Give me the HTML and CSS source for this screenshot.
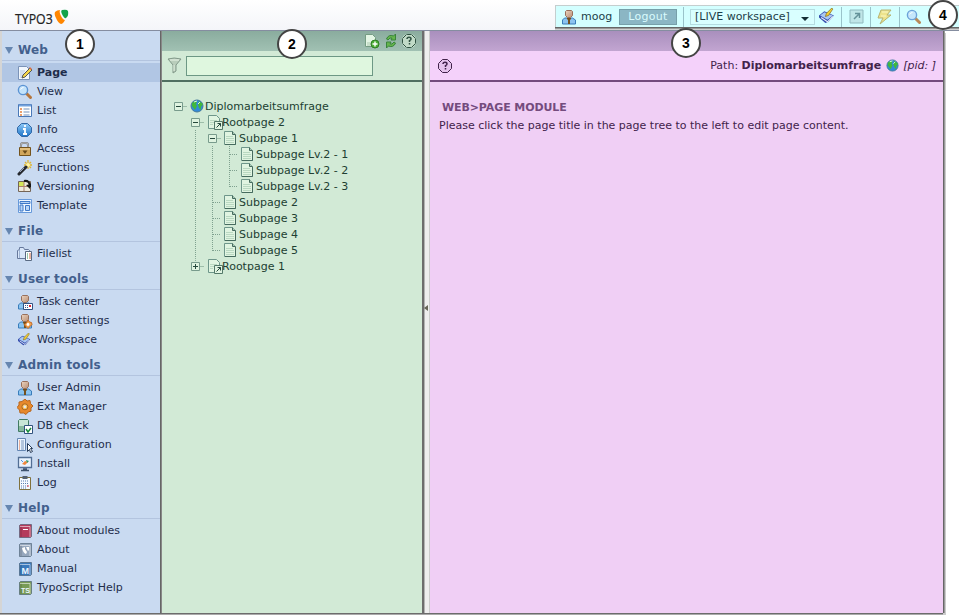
FILE: index.html
```html
<!DOCTYPE html>
<html lang="en">
<head>
<meta charset="utf-8">
<title>TYPO3</title>
<link rel="stylesheet" href="styles.css">
</head>
<body>
<svg class="defs" width="0" height="0">
<defs>
<linearGradient id="gb" x2="0" y2="1"><stop stop-color="#8fc9f7"/><stop offset="1" stop-color="#1e74c8"/></linearGradient>
<linearGradient id="gs" x2="1" y2="1"><stop stop-color="#ecd4bf"/><stop offset="1" stop-color="#b88f76"/></linearGradient>
</defs>
<symbol id="page-edit" viewBox="0 0 16 16"><path d="M1.5 1.5h8l3 3v10h-11z" fill="#f2f7fd" stroke="#7b93b8"/><path d="M3 6h5M3 8h4M3 10h3M3 12h2" stroke="#b3c6df"/><path d="M5 13l1-3 7-7 2 2-7 7z" fill="#f5d64a" stroke="#555"/><path d="M12 3l1-1 2 2-1 1z" fill="#d96a4a"/></symbol>
<symbol id="magnify" viewBox="0 0 16 16"><path d="M9.5 9.5l4 4" stroke="#b5763d" stroke-width="3" stroke-linecap="round"/><circle cx="6" cy="6" r="4.6" fill="#c3e3fb" stroke="#5b93d3" stroke-width="1.4"/><path d="M3.5 5.5q1-2 3-2" stroke="#fff" fill="none"/></symbol>
<symbol id="list" viewBox="0 0 16 16"><path d="M1.500 1.500h13v12h-13z" fill="#fff" stroke="#4a79b8"/><path d="M2 2.500h12" stroke="#74a3dd" stroke-width="2"/><path d="M3 6h2M3 9h2M3 12h2" stroke="#e5803b" stroke-width="1.500"/><path d="M6.500 6h6M6.500 9h6M6.500 12h6" stroke="#7390b9"/></symbol>
<symbol id="info" viewBox="0 0 16 16"><path d="M4.500 1.500h6l4 4v5l-4 4h-6l-4-4v-5z" fill="url(#gb)" stroke="#3268a6"/><path d="M8 3v2M6 7h2v5M6 12h4" fill="none" stroke="#fff" stroke-width="1.800"/></symbol>
<symbol id="lock" viewBox="0 0 16 16"><path d="M4 8V4q0-2 2-2h3q2 0 2 2v4" fill="none" stroke="#777" stroke-width="2"/><path d="M4 7V4q0-2 2-2h3q2 0 2 2v3" fill="none" stroke="#ddd" stroke-width=".7"/><path d="M2.500 6.500h11v8h-11z" fill="#d1a65c" stroke="#74531c"/><path d="M3 8h10" stroke="#f3d59b"/><path d="M5.500 9.500h5L8 13z" fill="#6a4b1a"/></symbol>
<symbol id="wand" viewBox="0 0 16 16"><path d="M11 0v9M7 5h8M8 2l6 6M14 2L8 8" stroke="#dfb530" stroke-width="1.300"/><circle cx="11" cy="5" r="2" fill="#fff4a5"/><path d="M2 14l7-7" stroke="#25282e" stroke-width="3" stroke-linecap="round"/><path d="M3 12l4-4" stroke="#9aa5bb"/></symbol>
<symbol id="version" viewBox="0 0 16 16"><path d="M1.500 2.500h12v10h-12z" fill="#efeadd" stroke="#756556"/><path d="M2 3h5v5H2z" fill="#d5e657"/><path d="M7 3v9M2 7.500h11" stroke="#ae8370"/><path d="M7 2q6-1 6 6" fill="none" stroke="#161616" stroke-width="2"/><path d="M9 6l4 4 1-5z" fill="#161616"/></symbol>
<symbol id="template" viewBox="0 0 16 16"><path d="M1.500 1.500h13v13h-13z" fill="#eff7ff" stroke="#6799da"/><path d="M3 3.500h10v2H3zM3 7h3v6H3zM8.500 7.500h4v5h-4z" fill="#b9d5f6" stroke="#3e79c8"/></symbol>
<symbol id="files" viewBox="0 0 16 16"><path d="M.5 12.500V4.500l2-1V1.500h4l1 2h4l1 1v8z" fill="#d9e7fa" stroke="#67799c"/><path d="M2.500 4v8" stroke="#9eb3d3"/><path d="M8.500 5.500h6v9h-6z" fill="#fff" stroke="#596a83"/><path d="M10 8h1M10 10h1M10 12h1" stroke="#2e8e52"/><path d="M12 8h2M12 10h2M12 12h2" stroke="#ce6840"/></symbol>
<symbol id="user" viewBox="0 0 16 16"><path d="M1.500 15V11l2-2h8l3 2v4z" fill="#8bc3ef" stroke="#397dbb"/><path d="M5.500 1.500h5l1 1v4l-2 2h-3l-2-2v-4z" fill="url(#gs)" stroke="#98705c"/><path d="M6 9h4v1l-1 1v4H7v-4L6 10z" fill="#74511f"/></symbol>
<symbol id="task" viewBox="0 0 16 16"><use href="#user"/><path d="M6.500 9.500h9v6h-9z" fill="#fff" stroke="#315283"/><path d="M8 11.500h1m1 0h1M8 13.500h1m1 0h1" stroke="#355b98"/><path d="M12 11h2v2h-2z" fill="#dd2634"/></symbol>
<symbol id="settings" viewBox="0 0 16 16"><use href="#user"/><path d="M11 7l1.500 2 2 .5.500 2-2 2-2 2-2-2-2-2 2-1z" fill="#f2a14f" stroke="#c56a22"/><circle cx="11" cy="11.500" r="1.400" fill="#fff"/></symbol>
<symbol id="workspace" viewBox="0 0 16 16"><path d="M0 7l5-4 9 4-5 6-3 1-6-5z" fill="#334cad"/><path d="M1 7l4-3 8 3-5 4z" fill="#a9c8f3"/><path d="M2 9l6 4 5-5" stroke="#e5ebf7" fill="none"/><path d="M6 8l1-3 5-5 1 1-4 6z" fill="#f2cd33" stroke="#76601d" stroke-width=".6"/></symbol>
<symbol id="gear" viewBox="0 0 16 16"><path d="M8 0l2 2 3-.5.500 3L16 7l-2 2 0 3-3 1-2 2.500L6.500 14 3 14l-.5-3L0 8.500 2 6l0-3 3-.5z" fill="#e7892c" stroke="#b8661e"/><circle cx="7.900" cy="7.800" r="3" fill="#ffc45d" stroke="#a86522"/><circle cx="7.900" cy="7.800" r="1.300" fill="#ddebfa"/></symbol>
<symbol id="db" viewBox="0 0 16 16"><path d="M1.500 2.500l1-1h8l1 1v11h-10z" fill="#c9e6d6" stroke="#417a62"/><path d="M2 8h9v5H2z" fill="#86b89d"/><path d="M7.500 7.500h8v8h-8z" fill="#fff" stroke="#31527d"/><path d="M9 11l2 3 3-4" fill="none" stroke="#168b3c" stroke-width="1.500"/></symbol>
<symbol id="config" viewBox="0 0 16 16"><path d="M.5 1.500h8v12h-8z" fill="#edf5ff" stroke="#6586b2"/><path d="M2 4h1M2 6h1M2 8h1M2 10h1M2 12h1" stroke="#e36f3a"/><path d="M4 4h3M4 6h3M4 8h3M4 10h3M4 12h3" stroke="#7996bc"/><path d="M10.500 6.500v8l2-2 1 3 2-1-2-3h2z" fill="#fff" stroke="#263a57"/></symbol>
<symbol id="install" viewBox="0 0 16 16"><path d="M1.500 1.500h13v10h-13z" fill="#e9f3ff" stroke="#526e94" stroke-width="1.300"/><path d="M4 14.500h8M6 13h4" stroke="#3c516d" stroke-width="1.500"/><path d="M5 8l3-3 3 1-3 3z" fill="#ef873c"/><path d="M9 4l3 1-2 2z" fill="#2d9764"/><path d="M4 4l2 2" stroke="#5694df"/></symbol>
<symbol id="log" viewBox="0 0 16 16"><path d="M2.500 2.500h11v12h-11z" fill="#f4faff" stroke="#80713c"/><path d="M5.500 1h5v3h-5z" fill="#536071"/><path d="M4 6h8M4 8.500h8M4 11h8M4 13h6" stroke="#597baf" stroke-dasharray="1 1"/><path d="M10 11h2" stroke="#dc3f4b"/></symbol>
<symbol id="book" viewBox="0 0 16 16"><path d="M2.500 2.500l1-1h11v12l-1 1h-11z" fill="currentColor" stroke="#394f62" stroke-opacity=".55"/><path d="M3 3.500h10V14" fill="none" stroke="#fff" stroke-opacity=".55"/><path d="M4 3.500V14" stroke="#000" stroke-opacity=".2"/></symbol>
<symbol id="globe" viewBox="0 0 14 14"><circle cx="7" cy="7" r="6" fill="#318bd9" stroke="#467a9c"/><path d="M2 4l3-2 2 1-1 2 1 2-2 4-3-4zM9 2l4 3-2 3 0 3-2-2-1-3z" fill="#41b83d"/><path d="M4 3l3-1M8 5l2-2" stroke="#dcfbdc"/></symbol>
<symbol id="page" viewBox="0 0 14 16"><path d="M1.500 1.500h8l3 3v10h-11z" fill="#e0f4e1" stroke="#6e968a"/><path d="M9.500 1.500v3h3" fill="#a9c8b4" stroke="#466b5e"/><path d="M12.500 5v9.500H2" fill="none" stroke="#466b5e"/><path d="M3 6.500h7M3 8.500h8M3 10.500h8M3 12.500h8" stroke="#b9d8c1"/></symbol>
<symbol id="root" viewBox="0 0 16 16"><path d="M1.500 1.500h8l3 3v10h-11z" fill="#e0f4e1" stroke="#6e968a"/><path d="M3 6.500h7M3 8.500h5M3 10.500h3" stroke="#b9d8c1"/><path d="M7.500 7.500h8v8h-8z" fill="#e0f4e1" stroke="#537869"/><path d="M9.500 13.500l4-4M10.500 9.500h3v3" fill="none" stroke="#25483c"/></symbol>
<symbol id="minus" viewBox="0 0 17 16"><path d="M4.500 4.500h8v8h-8z" fill="#dff3e0" stroke="#789b8c"/><path d="M6 8.500h5" stroke="#25483c"/><path d="M13 8.500h4" stroke="#9dbda9"/></symbol>
<symbol id="plus" viewBox="0 0 17 16"><use href="#minus"/><path d="M8.500 6v5" stroke="#25483c"/><path d="M8.500 0v4" stroke="#8cae9b" stroke-dasharray="1 1"/></symbol>
<symbol id="vert" viewBox="0 0 17 16"><path d="M8.500 0v16" stroke="#7fa18f" stroke-dasharray="1 1"/></symbol>
<symbol id="tee" viewBox="0 0 17 16"><path d="M8.500 0v16M9 8.500h8" stroke="#7fa18f" stroke-dasharray="1 1"/></symbol>
<symbol id="end" viewBox="0 0 17 16"><path d="M8.500 0v9M9 8.500h8" fill="none" stroke="#7fa18f" stroke-dasharray="1 1"/></symbol>
<symbol id="help" viewBox="0 0 14 14"><path d="M4.500.5h5l4 4v5l-4 4h-5l-4-4v-5z" fill="currentColor" fill-opacity=".08" stroke="currentColor"/><path d="M5 5q0-1.700 2-1.700T9 5Q9 6 7.500 6.600V8M7.500 9v1.500" fill="none" stroke="currentColor" stroke-width="1.500"/></symbol>
</svg>

<header class="top">
  <div class="logo"><span>TYPO3</span><svg width="16" height="16" viewBox="0 0 16 16"><path d="M1 3Q3 1 6 1Q5 3 7 7Q9 11 11 11Q9 15 7 15Q4 14 2 9Q0 5 1 3z" fill="#ff8600"/><path d="M8 1Q13 0 14 2Q15 7 12 9Q11 10 9 7Q6 2 8 1z" fill="#13a34a"/></svg></div>
  <div class="tools">
    <svg class="u" width="16" height="16"><use href="#user"/></svg><span class="name">moog</span><button class="logout">Logout</button><i class="sep s1"></i>
    <div class="select"><span>[LIVE workspace]</span><b></b></div>
    <svg class="ws" width="17" height="17"><use href="#workspace"/></svg><i class="sep s2"></i>
    <svg class="short" width="15" height="15" viewBox="0 0 15 15"><path d="M1 1h13v13H1z" fill="#bde2e4" stroke="#86aeb5"/><path d="M5 10l5-5M6 4.500h4.500V9" fill="none" stroke="#527f89" stroke-width="1.500"/></svg><i class="sep s3"></i>
    <svg class="flash" width="17" height="16" viewBox="0 0 17 16"><path d="M5 1h10l-4 5h4L4 15l3-6H2z" fill="#f2df78" stroke="#b2a65a"/><path d="M6 3h6M5 7h5" stroke="#fff5bd"/></svg><i class="sep s4"></i>
    <svg class="find" width="16" height="16"><use href="#magnify"/></svg>
  </div>
</header>

<main class="frame">
<nav class="menu">
  <section><h2>Web</h2><ul>
    <li class="on"><svg><use href="#page-edit"/></svg>Page</li>
    <li><svg><use href="#magnify"/></svg>View</li>
    <li><svg><use href="#list"/></svg>List</li>
    <li><svg><use href="#info"/></svg>Info</li>
    <li><svg><use href="#lock"/></svg>Access</li>
    <li><svg><use href="#wand"/></svg>Functions</li>
    <li><svg><use href="#version"/></svg>Versioning</li>
    <li><svg><use href="#template"/></svg>Template</li></ul></section>
  <section><h2>File</h2><ul><li><svg><use href="#files"/></svg>Filelist</li></ul></section>
  <section><h2>User tools</h2><ul>
    <li><svg><use href="#task"/></svg>Task center</li>
    <li><svg><use href="#settings"/></svg>User settings</li>
    <li><svg class="small"><use href="#workspace"/></svg>Workspace</li></ul></section>
  <section><h2>Admin tools</h2><ul>
    <li><svg><use href="#user"/></svg>User Admin</li>
    <li><svg><use href="#gear"/></svg>Ext Manager</li>
    <li><svg><use href="#db"/></svg>DB check</li>
    <li><svg><use href="#config"/></svg>Configuration</li>
    <li><svg><use href="#install"/></svg>Install</li>
    <li><svg><use href="#log"/></svg>Log</li></ul></section>
  <section><h2>Help</h2><ul>
    <li><svg class="red" viewBox="0 0 16 16"><use href="#book"/><path d="M6 6.500h5" stroke="#fff"/></svg>About modules</li>
    <li><svg class="grey" viewBox="0 0 16 16"><use href="#book"/><path d="M5 6l3-1v2l2 3-1 2Q6 11 5 6zM9 5h3v3l-1 1z" fill="#fff"/></svg>About</li>
    <li><svg class="blue" viewBox="0 0 16 16"><use href="#book"/><text x="4.500" y="12.500">M</text></svg>Manual</li>
    <li><svg class="green" viewBox="0 0 16 16"><use href="#book"/><text x="4" y="12.500" class="ts">TS</text></svg>TypoScript Help</li></ul></section>
</nav>

<aside class="treepane">
  <div class="bar">
    <svg width="16" height="16" viewBox="0 0 16 16"><path d="M1.500 1.500h7l3 3v9h-10z" fill="#e3f5e4" stroke="#759c83"/><path d="M3 10h7M3 12h6" stroke="#abc8b0"/><circle cx="11" cy="11" r="4" fill="#4cae35" stroke="#2f7e24"/><path d="M11 8.500v5M8.500 11h5" stroke="#fff" stroke-width="1.400"/></svg>
    <svg width="14" height="16" viewBox="0 0 14 16"><path d="M2.500 6q2-5 7-3l2-2v6H7l1-2q-2-1-4 2z" fill="#65b44d" stroke="#38843a"/><path d="M11.500 10q-2 5-7 3l-2 2V9H7l-1 2q2 1 4-2z" fill="#65b44d" stroke="#38843a"/></svg>
    <svg class="h" width="14" height="14"><use href="#help"/></svg>
  </div>
  <div class="filter"><svg width="16" height="17" viewBox="0 0 16 17"><path d="M1 2q6-2 13 0L9 8v6l-3 2V8z" fill="#b9cdbb" stroke="#82998a"/><path d="M3 3h9" stroke="#e9f5e8"/><path d="M7 8v6" stroke="#e3f1e2"/></svg><input type="text" aria-label="Filter"></div>
  <div class="tree">
    <p><svg><use href="#minus"/></svg><svg class="gl"><use href="#globe"/></svg>Diplomarbeitsumfrage</p>
    <p><s></s><svg><use href="#minus"/></svg><svg class="rt"><use href="#root"/></svg>Rootpage 2</p>
    <p><s></s><svg><use href="#vert"/></svg><svg><use href="#minus"/></svg><svg class="pg"><use href="#page"/></svg>Subpage 1</p>
    <p><s></s><svg><use href="#vert"/></svg><svg><use href="#vert"/></svg><svg><use href="#tee"/></svg><svg class="pg"><use href="#page"/></svg>Subpage Lv.2 - 1</p>
    <p><s></s><svg><use href="#vert"/></svg><svg><use href="#vert"/></svg><svg><use href="#tee"/></svg><svg class="pg"><use href="#page"/></svg>Subpage Lv.2 - 2</p>
    <p><s></s><svg><use href="#vert"/></svg><svg><use href="#vert"/></svg><svg><use href="#end"/></svg><svg class="pg"><use href="#page"/></svg>Subpage Lv.2 - 3</p>
    <p><s></s><svg><use href="#vert"/></svg><svg><use href="#tee"/></svg><svg class="pg"><use href="#page"/></svg>Subpage 2</p>
    <p><s></s><svg><use href="#vert"/></svg><svg><use href="#tee"/></svg><svg class="pg"><use href="#page"/></svg>Subpage 3</p>
    <p><s></s><svg><use href="#vert"/></svg><svg><use href="#tee"/></svg><svg class="pg"><use href="#page"/></svg>Subpage 4</p>
    <p><s></s><svg><use href="#vert"/></svg><svg><use href="#end"/></svg><svg class="pg"><use href="#page"/></svg>Subpage 5</p>
    <p><s></s><svg><use href="#plus"/></svg><svg class="rt"><use href="#root"/></svg>Rootpage 1</p>
  </div>
</aside>
<div class="splitter"><svg width="4" height="6" viewBox="0 0 4 6"><path d="M4 0v6L0 3z" fill="#666658"/></svg></div>
<article class="content">
  <div class="bar"></div>
  <div class="path"><svg width="14" height="14"><use href="#help"/></svg><span class="where">Path:&nbsp;</span><b>Diplomarbeitsumfrage</b><svg class="gl" width="13" height="13"><use href="#globe"/></svg><em>[pid: ]</em></div>
  <h1>WEB&gt;PAGE MODULE</h1>
  <p class="msg">Please click the page title in the page tree to the left to edit page content.</p>
</article>
</main>
<span class="badge b1">1</span><span class="badge b2">2</span><span class="badge b3">3</span><span class="badge b4">4</span>
</body>
</html>
```
FILE: styles.css
```css
* { box-sizing: border-box; }
body { margin: 0; width: 959px; height: 616px; overflow: hidden; position: relative; background: #fff; font: 11px/16px "DejaVu Sans", sans-serif; color: #1e2d4b; }
svg { display: block; flex: none; }
.defs { position: absolute; }
.top { height: 31px; display: flex; justify-content: space-between; background: linear-gradient(#fff, #f4f5f9); border-bottom: 1px solid #858da0; }
.logo { display: flex; align-items: flex-start; padding: 9px 0 0 15px; }
.logo span { font: 14px/19px "Open Sans", sans-serif; color: #222; width: 39px; transform: scaleX(.88); transform-origin: left; white-space: nowrap; -webkit-text-stroke: .2px #222; }
.tools { width: 404px; height: 22px; margin-top: 5px; padding-left: 5px; background: #d3ffff; border-left: 1px solid #c4cece; border-top: 1px solid #c4cece; box-shadow: 0 1px #666, 0 2px #999, 0 3px #d0d0d0; display: flex; align-items: center; color: #1c3e49; }
.name { margin-left: 4px; width: 38px; }
.logout { width: 58px; height: 16px; padding: 0; background: #8bb6c4; border: 1px solid #779fa9; color: #d9fbfd; font: 11px/13px "DejaVu Sans", sans-serif; letter-spacing: .3px; }
.sep { width: 1px; height: 20px; background: #9ac3ca; }
.s1 { margin: 0 6px 0 6px; }
.select { width: 125px; height: 16px; border: 1px solid #b5dce0; background: #d9ffff; display: flex; align-items: center; padding: 0 5px 0 4px; justify-content: space-between; line-height: 14px; }
.select b { border: 4px solid transparent; border-top-color: #142e35; border-bottom: 0; margin-top: 5px; }
.ws { margin-left: 4px; }
.s2 { margin: 0 7px 0 5px; }
.s3 { margin: 0 5px 0 6px; }
.s4 { margin: 0 6px 0 6px; }
.short, .flash, .find { opacity: .85; }
.frame { display: flex; height: 582px; background: #eee; width: 943px; box-shadow: 0 1px #6c6c6c, 0 2px #aaa, 1px 0 #666, 2px 0 #999, 3px 2px #ccc; }
.menu { width: 161px; padding-top: 10px; background: #c9daf1; border-left: 2px solid #d5d5d5; border-right: 1px solid #666; }
h2 { margin: 0; height: 20px; border-bottom: 1px solid #b3c4df; display: flex; align-items: center; gap: 5px; padding-left: 3px; font: bold 13px/19px "DejaVu Sans", sans-serif; font-size: 12px; letter-spacing: .2px; color: #43608d; }
h2::before { content: ""; border: 4.5px solid transparent; border-top: 7px solid #6686b0; border-bottom: 0; }
.menu ul { list-style: none; margin: 2px 0 7px; padding: 0; }
.menu li { height: 19px; display: flex; align-items: center; padding-left: 15px; gap: 4px; white-space: nowrap; }
.menu li svg { width: 16px; height: 16px; }
.menu .on { background: #b1c6e4; font-weight: bold; }
.menu .small { padding: 1px; }
.red { color: #b43b5c; } .grey { color: #96a7bd; } .blue { color: #3a79bc; } .green { color: #789b56; }
.menu text { font: bold 9px "Liberation Sans", sans-serif; fill: #e8f4ff; }
.menu .ts { font-size: 7px; }
.treepane { width: 261px; background: #d2ead6; border-left: 1px solid #888; color: #213f32; }
.bar { height: 20px; background: linear-gradient(#8aac9e, #a1c1b3); display: flex; justify-content: flex-end; align-items: center; padding-right: 6px; gap: 4px; }
.bar .h { color: #2f5142; background: #cce7d3; border-radius: 6px; }
.filter { height: 31px; border-bottom: 2px solid #506f61; display: flex; align-items: center; padding-left: 5px; gap: 3px; }
input { width: 187px; height: 20px; margin: 0; padding: 2px; border: 1px solid #6d9885; background: #dff7df; }
.tree { padding: 16px 0 0 8px; }
.tree p { height: 16px; margin: 0; display: flex; align-items: center; white-space: nowrap; line-height: 15px; }
.tree svg { width: 17px; height: 16px; }
.tree s { width: 17px; }
.tree .gl { width: 14px; height: 14px; margin: 0 1px 0 3px; }
.tree .rt { width: 16px; margin: 0 -1px 0 3px; }
.tree .pg { width: 14px; margin: 0 2px 0 2px; }
.splitter { width: 8px; border-left: 2px solid #6d6d6d; border-right: 1px solid #ccc; display: flex; align-items: center; box-shadow: inset 1px 0 #b3b3b3; padding-top: -1px; }
.splitter svg { margin-top: -29px; }
.content { flex: 1; background: #f0cff5; color: #42234b; }
.content .bar { background: linear-gradient(#a98fbd, #c2a5d1); }
.path { height: 31px; background: #f4d1fa; border-bottom: 2px solid #744b7d; display: flex; align-items: center; padding: 0 7px 0 8px; color: #42234b; }
.path .where { margin-left: auto; }
.path .gl { margin: 0 4px 0 5px; }
h1 { margin: 18px 0 0 12px; font: bold 11px/16px "DejaVu Sans", sans-serif; letter-spacing: -.1px; color: #744b7d; }
.msg { margin: 2px 0 0 9px; white-space: nowrap; }
.badge { position: absolute; width: 30px; height: 30px; border: 2px solid #444; border-radius: 50%; background: #fff; color: #000; font: bold 14px/27px "Liberation Sans", sans-serif; text-align: center; }
.b1 { left: 65px; top: 29px; } .b2 { left: 277px; top: 29px; } .b3 { left: 671px; top: 28px; } .b4 { left: 928px; top: 0; }
```
